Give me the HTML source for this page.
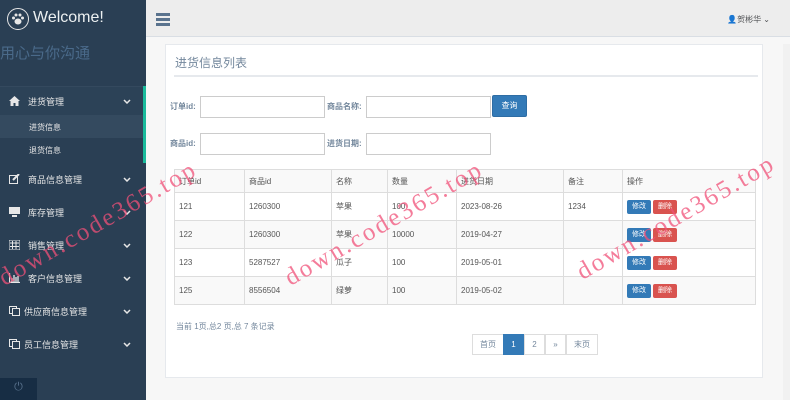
<!DOCTYPE html>
<html><head><meta charset="utf-8"><style>
*{box-sizing:border-box;margin:0;padding:0}
body{width:790px;height:400px;overflow:hidden;background:#f7f7f7;font-family:"Liberation Sans","Noto Sans CJK SC",sans-serif;font-size:9px;color:#73879c;position:relative}
.sb{position:absolute;left:0;top:0;width:146px;height:400px;background:#2a3f54;color:#e7e7e7}
.logo{position:absolute;left:7px;top:8px;width:22px;height:22px;border:1.5px solid #e7e7e7;border-radius:50%}
.wel{position:absolute;left:33px;top:9px;font-size:16px;color:#ecf0f1}
.slog{position:absolute;left:0;top:42px;font-size:15px;color:#4a6a8a}
.mi{position:absolute;left:0;width:146px;height:30px;font-size:9px;color:#e7e7e7}
.mi .ic{position:absolute;left:9px;top:9px;width:11px;height:10px}
.mi .t{position:absolute;left:28px;top:8px}
.mi .ch{position:absolute;left:123px;top:12px;width:8px;height:5px}
.act{background:#2c4257;border-top:1px solid #34495e}
.sub{position:absolute;left:0;top:115px;width:143px;height:48px;background:#2a3f54}
.sub div{height:23px;padding:7px 0 0 29px;font-size:8px;color:#e7e7e7}
.sub .on{background:#344a5f}
.green{position:absolute;left:143px;top:86px;width:3px;height:77px;background:#1abb9c}
.foot{position:absolute;left:0;top:378px;width:37px;height:22px;background:#172d44;color:#5a738e;text-align:center;font-size:11px;padding-top:3px}
.top{position:absolute;left:146px;top:0;width:644px;height:37px;background:#ededed;border-bottom:1px solid #d9dee4}
.ham{position:absolute;left:10px;top:13px;width:14px}
.ham i{display:block;height:2.5px;background:#5a738e;margin-bottom:2.5px}
.user{position:absolute;right:20px;top:14px;font-size:8px;color:#515356}
.panel{position:absolute;left:165px;top:44px;width:598px;height:334px;background:#fff;border:1px solid #e6e9ed}
.ptitle{position:absolute;left:9px;top:9px;font-size:12px;color:#73879c}
.hr{position:absolute;left:8px;top:30px;width:584px;height:2px;background:#e6e9ed}
.lbl{position:absolute;font-size:8px;font-weight:bold;color:#73879c}
.inp{position:absolute;width:125px;height:22px;border:1px solid #ccc;background:#fff}
.btn{position:absolute;left:492px;top:95px;width:35px;height:22px;background:#337ab7;border:1px solid #2e6da4;border-radius:2px;color:#fff;font-size:8px;text-align:center;line-height:20px}
table{position:absolute;left:174px;top:169px;width:582px;border-collapse:collapse;font-size:8px;color:#555}
td,th{border:1px solid #ddd;text-align:left;font-weight:normal;padding:0 4px;height:28px;vertical-align:middle}
th{height:23px}
tr:nth-child(odd) td{background:#f9f9f9}
tr.h th{background:#f9f9f9}
.b{display:inline-block;width:24px;height:14px;border-radius:2px;color:#fff;font-size:7px;text-align:center;line-height:14px;margin-right:2px}
.bb{background:#337ab7}.br{background:#d9534f}
.info{position:absolute;left:176px;top:321px;font-size:8px;color:#73879c}
.pg{position:absolute;top:334px;height:21px;border:1px solid #ddd;background:#fff;font-size:8px;color:#73879c;text-align:center;line-height:19px}
.wm{position:absolute;font-family:"Liberation Serif",serif;font-size:25px;color:rgba(240,80,120,.75);letter-spacing:2.5px;transform-origin:0 0;white-space:nowrap}
.scr{position:absolute;left:783px;top:44px;width:7px;height:356px;background:#f1f1f1}
</style></head><body>
<div class="sb">
<div class="logo"></div><svg style="position:absolute;left:11px;top:12px" width="14" height="14" viewBox="0 0 14 14" fill="#e7e7e7"><ellipse cx="7" cy="9.5" rx="3.5" ry="3"/><circle cx="2.5" cy="6" r="1.5"/><circle cx="11.5" cy="6" r="1.5"/><circle cx="5" cy="3" r="1.5"/><circle cx="9" cy="3" r="1.5"/></svg>
<div class="wel">Welcome!</div>
<div class="slog">用心与你沟通</div>
<div class="mi act" style="top:86px"><svg class="ic" viewBox="0 0 11 10"><path d="M0 5L5.5 0L11 5H9.5V10H6.5V7H4.5V10H1.5V5Z" fill="#e7e7e7"/></svg><span class="t">进货管理</span><svg class="ch" viewBox="0 0 8 5"><path d="M1 1L4 4L7 1" stroke="#e7e7e7" stroke-width="1.5" fill="none"/></svg></div>
<div class="sub"><div class="on">进货信息</div><div>退货信息</div></div>
<div class="green"></div>
<div class="mi" style="top:165px"><svg class="ic" viewBox="0 0 11 10"><rect x="0.5" y="1.5" width="8" height="8" fill="none" stroke="#e7e7e7"/><path d="M4 6L10 0" stroke="#e7e7e7" stroke-width="2"/></svg><span class="t">商品信息管理</span><svg class="ch" viewBox="0 0 8 5"><path d="M1 1L4 4L7 1" stroke="#e7e7e7" stroke-width="1.5" fill="none"/></svg></div>
<div class="mi" style="top:198px"><svg class="ic" viewBox="0 0 11 10"><rect x="0" y="0" width="11" height="7" fill="#e7e7e7"/><rect x="3" y="8" width="5" height="2" fill="#e7e7e7"/></svg><span class="t">库存管理</span><svg class="ch" viewBox="0 0 8 5"><path d="M1 1L4 4L7 1" stroke="#e7e7e7" stroke-width="1.5" fill="none"/></svg></div>
<div class="mi" style="top:231px"><svg class="ic" viewBox="0 0 11 10"><path d="M0 0H11V10H0ZM1 3H10M1 6.5H10M3.5 1V9M7 1V9" fill="none" stroke="#e7e7e7"/></svg><span class="t">销售管理</span><svg class="ch" viewBox="0 0 8 5"><path d="M1 1L4 4L7 1" stroke="#e7e7e7" stroke-width="1.5" fill="none"/></svg></div>
<div class="mi" style="top:264px"><svg class="ic" viewBox="0 0 11 10"><path d="M0.5 0V9.5H11M3 9V5M5 9V2M7 9V4M9 9V3" stroke="#e7e7e7" fill="none" stroke-width="1.3"/></svg><span class="t">客户信息管理</span><svg class="ch" viewBox="0 0 8 5"><path d="M1 1L4 4L7 1" stroke="#e7e7e7" stroke-width="1.5" fill="none"/></svg></div>
<div class="mi" style="top:297px"><svg class="ic" viewBox="0 0 11 10"><rect x="0.5" y="0.5" width="7" height="7" fill="none" stroke="#e7e7e7"/><rect x="3.5" y="2.5" width="7" height="7" fill="#2a3f54" stroke="#e7e7e7"/></svg><span class="t" style="left:24px">供应商信息管理</span><svg class="ch" viewBox="0 0 8 5"><path d="M1 1L4 4L7 1" stroke="#e7e7e7" stroke-width="1.5" fill="none"/></svg></div>
<div class="mi" style="top:330px"><svg class="ic" viewBox="0 0 11 10"><rect x="0.5" y="0.5" width="7" height="7" fill="none" stroke="#e7e7e7"/><rect x="3.5" y="2.5" width="7" height="7" fill="#2a3f54" stroke="#e7e7e7"/></svg><span class="t" style="left:24px">员工信息管理</span><svg class="ch" viewBox="0 0 8 5"><path d="M1 1L4 4L7 1" stroke="#e7e7e7" stroke-width="1.5" fill="none"/></svg></div>
<div class="foot">⏻</div>
</div>
<div class="top"><div class="ham"><i></i><i></i><i></i></div><div class="user">👤贺彬华 ⌄</div></div>
<div class="scr"></div>
<div class="panel"><div class="ptitle">进货信息列表</div><div class="hr"></div></div>
<div class="lbl" style="left:170px;top:101px">订单id:</div><div class="inp" style="left:200px;top:96px"></div>
<div class="lbl" style="left:327px;top:101px">商品名称:</div><div class="inp" style="left:366px;top:96px"></div>
<div class="btn">查询</div>
<div class="lbl" style="left:170px;top:138px">商品id:</div><div class="inp" style="left:200px;top:133px"></div>
<div class="lbl" style="left:327px;top:138px">进货日期:</div><div class="inp" style="left:366px;top:133px"></div>
<table>
<tr class="h"><th style="width:70px">订单id</th><th style="width:87px">商品id</th><th style="width:56px">名称</th><th style="width:69px">数量</th><th style="width:107px">进货日期</th><th style="width:59px">备注</th><th>操作</th></tr>
<tr><td>121</td><td>1260300</td><td>苹果</td><td>100</td><td>2023-08-26</td><td>1234</td><td><span class="b bb">修改</span><span class="b br">删除</span></td></tr>
<tr><td>122</td><td>1260300</td><td>苹果</td><td>10000</td><td>2019-04-27</td><td></td><td><span class="b bb">修改</span><span class="b br">删除</span></td></tr>
<tr><td>123</td><td>5287527</td><td>瓜子</td><td>100</td><td>2019-05-01</td><td></td><td><span class="b bb">修改</span><span class="b br">删除</span></td></tr>
<tr><td>125</td><td>8556504</td><td>绿萝</td><td>100</td><td>2019-05-02</td><td></td><td><span class="b bb">修改</span><span class="b br">删除</span></td></tr>
</table>
<div class="info">当前 1页,总2 页,总 7 条记录</div>
<div class="pg" style="left:472px;width:32px">首页</div>
<div class="pg" style="left:503px;width:21px;background:#337ab7;border-color:#337ab7;color:#fff">1</div>
<div class="pg" style="left:524px;width:21px">2</div>
<div class="pg" style="left:545px;width:21px">»</div>
<div class="pg" style="left:566px;width:32px">末页</div>
<div class="wm" style="left:-6px;top:268px;transform:rotate(-30deg)">down.code365.top</div>
<div class="wm" style="left:280px;top:268px;transform:rotate(-30deg)">down.code365.top</div>
<div class="wm" style="left:572px;top:262px;transform:rotate(-30deg)">down.code365.top</div>
</body></html>
